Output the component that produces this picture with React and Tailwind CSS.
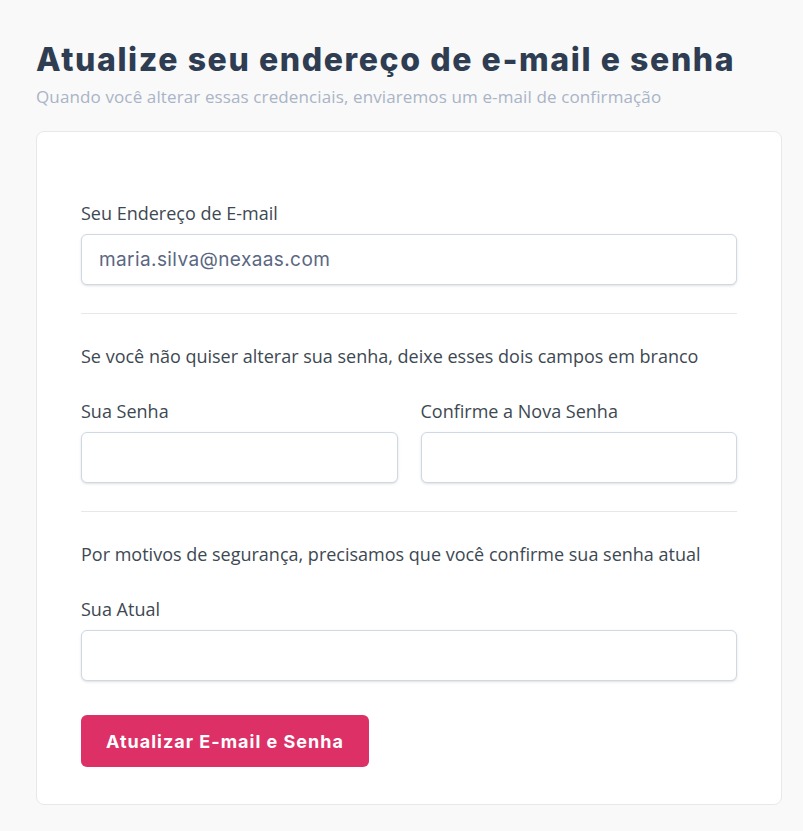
import React from 'react';

const Field = ({ label, value, className = '' }) => (
  <div className={className}>
    <label className="block text-[18px] leading-[26px] text-[#3d4852]">{label}</label>
    <input
      type="text"
      defaultValue={value}
      className="mt-[8px] block h-[51px] w-full rounded-md border border-[#cfd8e3] bg-white px-[17px] text-[19px] tracking-[0.4px] text-[#5a6782] shadow-sm outline-none font-['Inter',sans-serif]"
    />
  </div>
);

const App = () => {
  return (
    <div className="min-h-screen bg-[#f9f9f9] pl-9 pr-[21px] pt-[40px] pb-6 font-['Open_Sans',sans-serif]">
      <h1 className="text-[32px] font-extrabold leading-10 tracking-[1.6px] text-[#2f3d52] font-['Inter',sans-serif]">
        Atualize seu endereço de e-mail e senha
      </h1>
      <p className="mt-[5px] text-[17px] leading-6 tracking-[0.12px] text-[#a9b4c6]">
        Quando você alterar essas credenciais, enviaremos um e-mail de confirmação
      </p>

      <div className="mt-[22px] rounded-lg border border-[#e8e8e8] bg-white px-11 pt-[68px] pb-[37px]">
        <Field label="Seu Endereço de E-mail" value="maria.silva@nexaas.com" />

        <hr className="mt-[28px] mb-[29px] border-[#e8e8e8]" />

        <p className="text-[18px] leading-[26px] text-[#3d4852]">
          Se você não quiser alterar sua senha, deixe esses dois campos em branco
        </p>
        <div className="mt-[29px] grid grid-cols-2 gap-[23px]">
          <Field label="Sua Senha" />
          <Field label="Confirme a Nova Senha" />
        </div>

        <hr className="mt-[28px] mb-[29px] border-[#e8e8e8]" />

        <p className="text-[18px] leading-[26px] text-[#3d4852]">
          Por motivos de segurança, precisamos que você confirme sua senha atual
        </p>
        <Field label="Sua Atual" className="mt-[29px]" />

        <button className="mt-[34px] h-[52px] rounded-md bg-[#dc3066] px-[25px] text-[18px] font-bold tracking-[1px] text-white font-['Inter',sans-serif]">
          Atualizar E-mail e Senha
        </button>
      </div>
    </div>
  );
};

export default App;
